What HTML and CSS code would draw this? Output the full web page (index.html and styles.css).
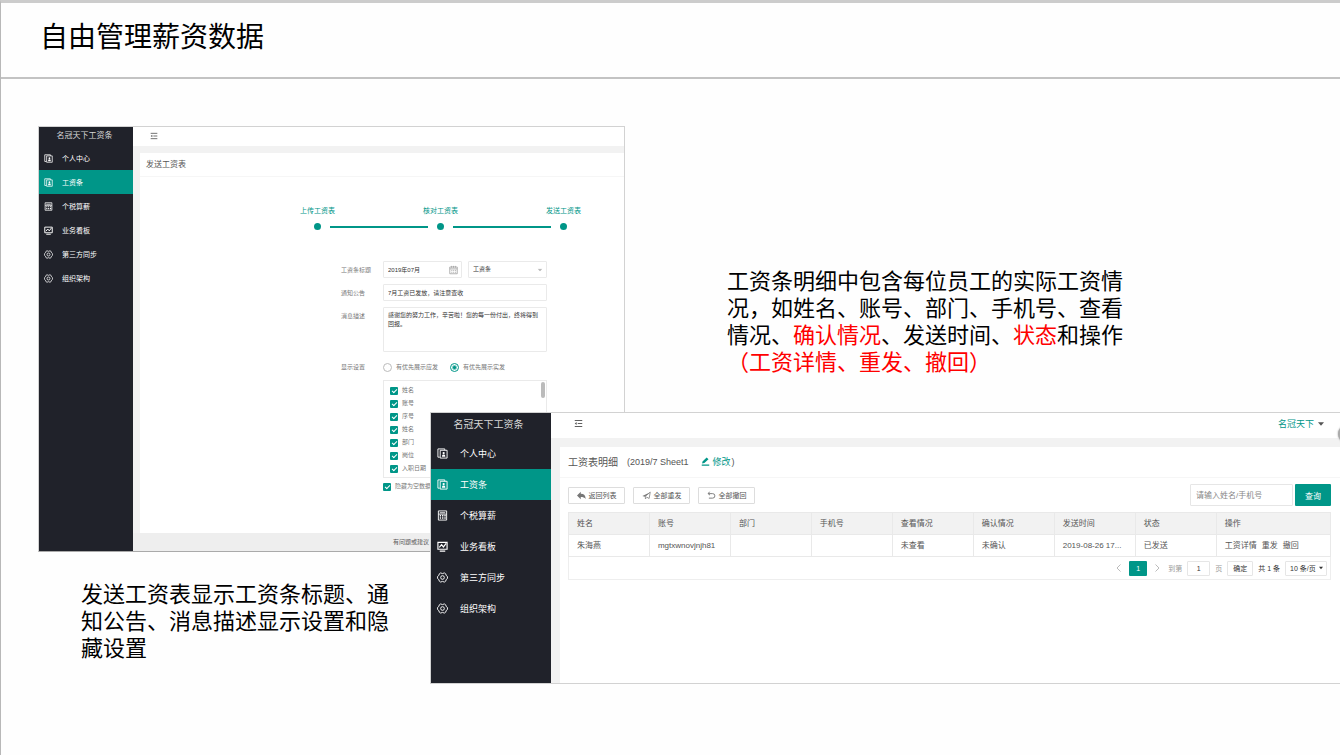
FILE: index.html
```html
<!DOCTYPE html>
<html lang="zh-CN">
<head>
<meta charset="utf-8">
<title>自由管理薪资数据</title>
<link rel="stylesheet" href="styles.css">
</head>
<body>
<svg class="sprite" aria-hidden="true">
  <symbol id="i-user" viewBox="0 0 24 24"><g fill="none" stroke="currentColor" stroke-width="2"><path d="M6 20H2V2h15v3"/><path d="M7 5h15v17H7z"/></g><circle cx="14.500" cy="11" r="2.500" fill="currentColor"/><path d="M11 19v-2q0-3 3.500-3t3.500 3v2z" fill="currentColor"/></symbol>
  <symbol id="i-calc" viewBox="0 0 24 24"><g fill="none" stroke="currentColor" stroke-width="2"><path d="M3 2h18v20H3zM3 9h18M6 6h12"/></g><g fill="currentColor"><path d="M6 11h3v3H6zM11 11h3v3h-3zM16 11h3v3h-3zM6 16h3v3H6zM11 16h3v3h-3zM16 16h3v3h-3z"/></g></symbol>
  <symbol id="i-board" viewBox="0 0 24 24"><g fill="none" stroke="currentColor" stroke-width="2.500"><path d="M2 3h20v15H2zM6 22h12"/><path d="M5 14l5-6 4 5 6-8"/></g></symbol>
  <symbol id="i-gear" viewBox="0 0 24 24"><g fill="none" stroke="currentColor" stroke-width="2"><path d="M8 2q4 3 8 0l3 2q0 4 4 6v4q-4 2-4 6l-3 2q-4-3-8 0l-3-2q0-4-4-6v-4q4-2 4-6z"/><circle cx="12" cy="12" r="4"/></g></symbol>
  <symbol id="i-menu" viewBox="0 0 24 24"><path d="M2 4h20M10 12h12M2 20h20" fill="none" stroke="currentColor" stroke-width="2.500"/><path d="M7 8v8l-5-4z" fill="currentColor"/></symbol>
  <symbol id="i-cal" viewBox="0 0 24 24"><path d="M2 4h20v18H2zM2 9h20M7 1v5M12 1v5M17 1v5M6 13h3M11 13h3M16 13h3M6 18h3M11 18h3M16 18h3" fill="none" stroke="currentColor" stroke-width="2"/></symbol>
  <symbol id="i-back" viewBox="0 0 24 24"><path d="M10 2v5c9 0 13 5 13 14-3-4-7-5-13-5v6L0 12z" fill="currentColor"/></symbol>
  <symbol id="i-send" viewBox="0 0 24 24"><path d="M1 13L22 3 7 15z" fill="currentColor"/><path d="M22 3L9 14v7l4-4M22 3l-3 17-7-4" fill="none" stroke="currentColor" stroke-width="2"/></symbol>
  <symbol id="i-undo" viewBox="0 0 24 24"><path d="M7 2L3 7l5 4M3 7h12q6 0 6 6t-6 6H5" fill="none" stroke="currentColor" stroke-width="2.500"/></symbol>
  <symbol id="i-pen" viewBox="0 0 24 24"><path d="M3 17l1-5L15 1l5 5L9 16zM2 20h20v3H2z" fill="currentColor"/></symbol>
  <symbol id="i-down" viewBox="0 0 10 6"><path d="M0 0h10L5 6z" fill="currentColor"/></symbol>
  <symbol id="i-prev" viewBox="0 0 10 16"><path d="M9 1L2 8l7 7" fill="none" stroke="currentColor" stroke-width="2"/></symbol>
  <symbol id="i-next" viewBox="0 0 10 16"><path d="M1 1l7 7-7 7" fill="none" stroke="currentColor" stroke-width="2"/></symbol>
</svg>

<main class="slide">
  <header class="slide-header"><h1>自由管理薪资数据</h1></header>

  <section class="window window-send">
    <aside class="sidebar">
      <div class="brand">名冠天下工资条</div>
      <nav>
        <a href="#"><svg><use href="#i-user"/></svg>个人中心</a>
        <a href="#" class="active"><svg><use href="#i-user"/></svg>工资条</a>
        <a href="#"><svg><use href="#i-calc"/></svg>个税算薪</a>
        <a href="#"><svg><use href="#i-board"/></svg>业务看板</a>
        <a href="#"><svg><use href="#i-gear"/></svg>第三方同步</a>
        <a href="#"><svg><use href="#i-gear"/></svg>组织架构</a>
      </nav>
    </aside>
    <div class="main">
      <div class="topbar"><svg class="menu"><use href="#i-menu"/></svg></div>
      <div class="card">
        <h2 class="card-title">发送工资表</h2>
        <div class="steps">
          <div class="step-labels"><span>上传工资表</span><span>核对工资表</span><span>发送工资表</span></div>
          <div class="step-track"><i class="dot"></i><i class="line"></i><i class="dot"></i><i class="line"></i><i class="dot"></i></div>
        </div>
        <form class="form">
          <label for="month">工资条标题</label>
          <div class="pair">
            <span class="field"><input id="month" type="text" value="2019年07月"><svg class="cal"><use href="#i-cal"/></svg></span>
            <span class="field"><select aria-label="类型"><option>工资条</option></select><svg class="caret"><use href="#i-down"/></svg></span>
          </div>
          <label for="notice">通知公告</label>
          <input id="notice" type="text" value="7月工资已发放，请注意查收">
          <label for="desc">消息描述</label>
          <textarea id="desc">感谢您的努力工作，辛苦啦！您的每一份付出，终将得到回报。</textarea>
          <span class="label">显示设置</span>
          <div class="radios">
            <label><input type="radio" name="show">有优先展示应发</label>
            <label><input type="radio" name="show" checked>有优先展示实发</label>
          </div>
          <div class="checks">
            <label><input type="checkbox" checked>姓名</label>
            <label><input type="checkbox" checked>账号</label>
            <label><input type="checkbox" checked>序号</label>
            <label><input type="checkbox" checked>姓名</label>
            <label><input type="checkbox" checked>部门</label>
            <label><input type="checkbox" checked>岗位</label>
            <label><input type="checkbox" checked>入职日期</label>
            <i class="scroll"></i>
          </div>
          <label class="hide-empty"><input type="checkbox" checked>隐藏为空数据</label>
        </form>
      </div>
      <footer class="foot">有问题或建议</footer>
    </div>
  </section>

  <section class="window window-detail">
    <aside class="sidebar">
      <div class="brand">名冠天下工资条</div>
      <nav>
        <a href="#"><svg><use href="#i-user"/></svg>个人中心</a>
        <a href="#" class="active"><svg><use href="#i-user"/></svg>工资条</a>
        <a href="#"><svg><use href="#i-calc"/></svg>个税算薪</a>
        <a href="#"><svg><use href="#i-board"/></svg>业务看板</a>
        <a href="#"><svg><use href="#i-gear"/></svg>第三方同步</a>
        <a href="#"><svg><use href="#i-gear"/></svg>组织架构</a>
      </nav>
    </aside>
    <div class="main">
      <div class="topbar">
        <svg class="menu"><use href="#i-menu"/></svg>
        <a href="#" class="account">名冠天下<svg><use href="#i-down"/></svg></a>
      </div>
      <div class="card">
        <div class="card-title"><h2>工资表明细</h2><span>(2019/7 Sheet1</span><a href="#"><svg><use href="#i-pen"/></svg>修改</a><span>)</span></div>
        <div class="content">
          <div class="toolbar">
            <button type="button"><svg><use href="#i-back"/></svg>返回列表</button>
            <button type="button"><svg><use href="#i-send"/></svg>全部重发</button>
            <button type="button"><svg><use href="#i-undo"/></svg>全部撤回</button>
            <form class="search"><input type="text" placeholder="请输入姓名/手机号" aria-label="请输入姓名/手机号"><button type="button">查询</button></form>
          </div>
          <table>
            <thead><tr><th>姓名</th><th>账号</th><th>部门</th><th>手机号</th><th>查看情况</th><th>确认情况</th><th>发送时间</th><th>状态</th><th class="ops">操作</th></tr></thead>
            <tbody><tr><td>朱海燕</td><td>mgtxwnovjnjh81</td><td></td><td></td><td>未查看</td><td>未确认</td><td>2019-08-26 17...</td><td>已发送</td><td class="ops"><a href="#">工资详情</a><a href="#">重发</a><a href="#">撤回</a></td></tr></tbody>
          </table>
          <div class="pager">
            <svg><use href="#i-prev"/></svg>
            <button type="button" class="current">1</button>
            <svg><use href="#i-next"/></svg>
            <label for="page">到第</label><input id="page" type="text" value="1"><span class="muted">页</span>
            <button type="button" class="go">确定</button>
            <span>共 1 条</span>
            <span class="field"><select aria-label="每页条数"><option>10 条/页</option></select><svg class="caret"><use href="#i-down"/></svg></span>
          </div>
        </div>
      </div>
    </div>
    <i class="knob"></i>
  </section>

  <p class="caption caption-detail">工资条明细中包含每位员工的实际工资情况，如姓名、账号、部门、手机号、查看情况、<em>确认情况</em>、发送时间、<em>状态</em>和操作<em>（工资详情、重发、撤回）</em></p>
  <p class="caption caption-send">发送工资表显示工资条标题、通知公告、消息描述显示设置和隐藏设置</p>
</main>
</body>
</html>
```

FILE: styles.css
```css
* { box-sizing: border-box; }
body {
  margin: 0;
  background: #fefefe;
  color: #000;
  font-family: "Liberation Sans", "Noto Sans CJK SC", sans-serif;
}
.sprite { position: absolute; width: 0; height: 0; }
h1, h2, p { margin: 0; font-weight: 400; }
a { color: inherit; text-decoration: none; }
i { display: block; }
em { font-style: normal; color: #f00; }
input, select, textarea, button { font: inherit; color: inherit; margin: 0; border-radius: 1px; outline: 0; }
select, input { appearance: none; }

.slide {
  position: relative;
  min-height: 100vh;
  overflow: hidden;
  border-top: 3px solid #ccc;
  border-left: 1px solid #b8b8b8;
}
.slide-header {
  display: flex;
  align-items: center;
  height: 76px;
  padding: 0 39px 4px;
  border-bottom: 2px solid #c3c3c3;
}
.slide-header h1 { font-size: 28px; line-height: 40px; }

.caption { position: absolute; font-size: 22px; line-height: 27px; }
.caption-detail { left: 726px; top: 265px; width: 404px; }
.caption-send { left: 80px; top: 578px; width: 314px; }

/* Windows */
.window {
  position: absolute;
  display: flex;
  border: 1px solid #d2d2d2;
  background: #f2f2f2;
}
.sidebar { background: #20222a; color: #fff; }
.brand { display: flex; align-items: center; justify-content: center; color: #d8d8d8; }
.sidebar nav { display: flex; flex-direction: column; }
.sidebar a { display: flex; align-items: center; }
.sidebar .active { background: #009688; }
.main { flex: 1; min-width: 0; display: flex; flex-direction: column; color: #555; }
.topbar { display: flex; align-items: center; background: #fff; }
.card { flex: 1; background: #fff; }
.field { position: relative; display: block; }
.field svg { position: absolute; top: 50%; transform: translateY(-50%); pointer-events: none; }

/* Send window */
.window-send { left: 37px; top: 123px; width: 587px; height: 426px; border-bottom-color: #aaa; }
.window-send .sidebar { width: 94px; font-size: 7px; }
.window-send .brand { height: 19px; font-size: 8px; padding: 0 3px 4px 0; }
.window-send .sidebar a { height: 24px; padding-left: 5px; gap: 9px; }
.window-send .sidebar svg { width: 9px; height: 9px; }
.window-send .topbar { height: 19px; padding: 0 17px 2px; }
.window-send .menu { width: 8px; height: 8px; }
.window-send .card { margin: 7px 0 0 7px; }
.window-send .card-title { height: 24px; line-height: 23px; padding-left: 6px; border-bottom: 1px solid #f6f6f6; font-size: 8px; }
.steps { width: 281px; margin: 28px 0 0 160px; }
.step-labels { display: flex; justify-content: space-between; font-size: 7px; line-height: 12px; color: #009688; }
.step-track { display: flex; align-items: center; gap: 9px; padding: 0 14px; margin-top: 6px; }
.dot { width: 7px; height: 7px; border-radius: 50%; background: #009688; }
.line { flex: 1; height: 2px; background: #009688; }
.form {
  display: grid;
  grid-template-columns: 42px 164px;
  row-gap: 6px;
  margin: 31px 0 0 201px;
  font-size: 6px;
  line-height: 9px;
  color: #777;
}
.form > label, .form .label { padding-top: 5px; }
.pair { display: grid; grid-template-columns: 79px 79px; gap: 6px; }
.form input[type="text"], .form select, .form textarea {
  display: block;
  width: 100%;
  height: 17px;
  padding: 0 4px;
  border: 1px solid #eaeaea;
  background: #fff;
  color: #333;
}
.form textarea { height: 45px; padding-top: 3px; resize: none; overflow: hidden; }
.form .cal { width: 9px; height: 10px; right: 4px; color: #999; }
.form .caret { width: 6px; height: 3px; right: 4px; color: #bbb; }
.radios { display: flex; gap: 12px; padding-top: 4px; }
.radios label { display: flex; align-items: center; gap: 4px; }
.form input[type="radio"] { width: 9px; height: 9px; border: 1px solid #bbb; border-radius: 50%; }
.form input[type="radio"]:checked { border-color: #009688; background: radial-gradient(circle, #009688 1px, #fff 3px); }
.checks {
  position: relative;
  grid-column: 2;
  height: 98px;
  padding: 3px 6px;
  margin-top: 2px;
  border: 1px solid #eaeaea;
}
.checks label, .hide-empty { display: flex; align-items: center; gap: 4px; height: 13px; }
.form input[type="checkbox"] {
  display: grid;
  place-items: center;
  width: 8px;
  height: 8px;
  background: #009688;
}
.form input[type="checkbox"]::after {
  content: "";
  width: 4px;
  height: 2px;
  border: solid #fff;
  border-width: 0 0 1px 1px;
  transform: rotate(-45deg);
}
.scroll { position: absolute; top: 1px; right: 1px; width: 4px; height: 16px; border-radius: 2px; background: #bbb; }
.form .hide-empty { grid-column: 2; padding: 0; margin-top: -4px; }
.foot { height: 18px; padding-left: 260px; background: #eee; font-size: 6px; line-height: 18px; }

/* Detail window */
.window-detail { left: 429px; right: 0; top: 409px; height: 272px; border-right: 0; }
.window-detail .sidebar { width: 120px; font-size: 9px; }
.window-detail .brand { height: 25px; font-size: 10px; padding: 0 5px 4px 0; }
.window-detail .sidebar a { height: 31px; padding-left: 6px; gap: 12px; }
.window-detail .sidebar svg { width: 11px; height: 11px; }
.window-detail .topbar { height: 25px; padding: 0 16px 4px 23px; justify-content: space-between; }
.window-detail .menu { width: 9px; height: 9px; }
.account { display: flex; align-items: center; gap: 4px; font-size: 9px; color: #009688; }
.account svg { width: 6px; height: 4px; color: #555; }
.window-detail .card { margin: 9px 0 0 9px; }
.window-detail .card-title { display: flex; align-items: center; height: 31px; padding: 0 8px 1px; border-bottom: 1px solid #f6f6f6; font-size: 9px; }
.card-title h2 { font-size: 10px; margin-right: 9px; }
.card-title a { display: flex; align-items: center; gap: 3px; margin: 0 1px 0 12px; color: #009688; }
.card-title svg { width: 9px; height: 9px; }
.content { padding: 6px 9px 0 8px; font-size: 8px; }
.toolbar { display: flex; align-items: center; gap: 8px; margin-bottom: 6px; }
.toolbar > button {
  display: flex;
  align-items: center;
  justify-content: center;
  gap: 3px;
  width: 57px;
  height: 17px;
  padding: 0;
  border: 1px solid #ddd;
  background: #fff;
  font-size: 7px;
}
.toolbar svg { width: 9px; height: 9px; color: #777; }
.search { display: flex; gap: 2px; margin-left: auto; }
.search input { width: 103px; height: 22px; padding: 0 5px; border: 1px solid #e6e6e6; background: #fff; }
.search input::placeholder { color: #888; }
.search button { width: 36px; height: 22px; padding: 0; border: 0; background: #009688; color: #fff; }
table { width: 100%; table-layout: fixed; border-collapse: collapse; }
th, td {
  height: 22px;
  padding: 0 8px;
  border: 1px solid #e9e9e9;
  font-weight: 400;
  text-align: left;
  line-height: 12px;
  white-space: nowrap;
}
th { background: #f2f2f2; }
.ops { width: 15%; }
.ops a { margin-right: 5px; }
.pager {
  display: flex;
  align-items: center;
  justify-content: flex-end;
  gap: 5px;
  height: 23px;
  padding-right: 3px;
  border: 1px solid #eee;
  border-top: 0;
  font-size: 7px;
  color: #333;
}
.pager > svg { width: 5px; height: 8px; margin: 0 3px; color: #bbb; }
.pager label, .muted { color: #999; }
.pager input, .pager .go, .pager select { height: 15px; padding: 0; border: 1px solid #e6e6e6; background: #fff; text-align: center; }
.pager input { width: 23px; }
.pager button { width: 26px; }
.pager .current { width: 18px; height: 15px; padding: 0; border: 0; background: #009688; color: #fff; }
.pager select { display: block; width: 42px; padding-left: 4px; text-align: left; }
.pager .caret { width: 4px; height: 4px; right: 4px; }
.knob { position: absolute; right: -16px; top: 12px; width: 18px; height: 18px; border-radius: 50%; background: #aaa; box-shadow: 0 0 2px #999; }
```
